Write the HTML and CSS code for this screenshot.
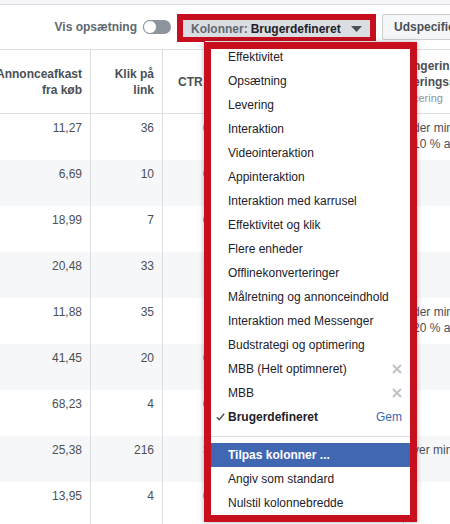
FILE: index.html
```html
<!DOCTYPE html>
<html lang="da">
<head>
<meta charset="utf-8">
<title>Kolonner</title>
<link rel="stylesheet" href="styles.css">
</head>
<body>
<div class="topstrip"></div>
<div class="toolbar">
  <div class="setup">
    <span class="setup-label">Vis opsætning</span>
    <span class="toggle"><span class="toggle-knob"></span></span>
  </div>
  <div class="cols-mark">
    <div class="cols-btn">
      <span class="cols-key">Kolonner:</span><span class="cols-val">Brugerdefineret</span>
      <svg class="caret" width="11" height="6" viewBox="0 0 11 6"><path d="M0 0H11L5.5 6Z" fill="#4b4f56"/></svg>
    </div>
  </div>
  <div class="split-btn">Udspecificering</div>
</div>

<div class="grid">
  <div class="row head">
    <div class="cell num"><span>Annonceafkast</span><span>fra køb</span></div>
    <div class="cell num"><span>Klik på</span><span>link</span></div>
    <div class="cell ctr-head">CTR</div>
    <div class="cell last"><span>ngering</span><span>eringsstatus</span><span class="sub">cering</span></div>
  </div>
  <div class="row"><div class="cell num">11,27</div><div class="cell num">36</div><div class="cell ctr">0,62 %</div><div class="cell last"><span>der minimum</span><span>10 % af</span></div></div>
  <div class="row alt"><div class="cell num">6,69</div><div class="cell num">10</div><div class="cell ctr">0,48 %</div><div class="cell last"></div></div>
  <div class="row"><div class="cell num">18,99</div><div class="cell num">7</div><div class="cell ctr">0,71 %</div><div class="cell last"></div></div>
  <div class="row alt"><div class="cell num">20,48</div><div class="cell num">33</div><div class="cell ctr">1,05 %</div><div class="cell last"></div></div>
  <div class="row"><div class="cell num">11,88</div><div class="cell num">35</div><div class="cell ctr">1,12 %</div><div class="cell last"><span>der minimum</span><span>20 % af</span></div></div>
  <div class="row alt"><div class="cell num">41,45</div><div class="cell num">20</div><div class="cell ctr">0,93 %</div><div class="cell last"></div></div>
  <div class="row"><div class="cell num">68,23</div><div class="cell num">4</div><div class="cell ctr">0,35 %</div><div class="cell last"></div></div>
  <div class="row alt"><div class="cell num">25,38</div><div class="cell num">216</div><div class="cell ctr">3,14 %</div><div class="cell last"><span>ver minimum</span></div></div>
  <div class="row"><div class="cell num">13,95</div><div class="cell num">4</div><div class="cell ctr">0,52 %</div><div class="cell last"></div></div>
</div>

<div class="menu">
  <div class="menu-item">Effektivitet</div>
  <div class="menu-item">Opsætning</div>
  <div class="menu-item">Levering</div>
  <div class="menu-item">Interaktion</div>
  <div class="menu-item">Videointeraktion</div>
  <div class="menu-item">Appinteraktion</div>
  <div class="menu-item">Interaktion med karrusel</div>
  <div class="menu-item">Effektivitet og klik</div>
  <div class="menu-item">Flere enheder</div>
  <div class="menu-item">Offlinekonverteringer</div>
  <div class="menu-item">Målretning og annonceindhold</div>
  <div class="menu-item">Interaktion med Messenger</div>
  <div class="menu-item">Budstrategi og optimering</div>
  <div class="menu-item">MBB (Helt optimneret)<svg class="remove" width="10" height="10" viewBox="0 0 10 10"><path d="M1 1L9 9M9 1L1 9" stroke="#bec3c9" stroke-width="2"/></svg></div>
  <div class="menu-item">MBB<svg class="remove" width="10" height="10" viewBox="0 0 10 10"><path d="M1 1L9 9M9 1L1 9" stroke="#bec3c9" stroke-width="2"/></svg></div>
  <div class="menu-item checked"><svg class="check" width="9" height="8" viewBox="0 0 9 8"><path d="M0.8 4.2L3.2 6.6L8.2 0.8" fill="none" stroke="#4b4f56" stroke-width="1.4"/></svg>Brugerdefineret<span class="gem">Gem</span></div>
  <div class="sep"></div>
  <div class="menu-item active">Tilpas kolonner ...</div>
  <div class="menu-item">Angiv som standard</div>
  <div class="menu-item">Nulstil kolonnebredde</div>
</div>
<div class="menu-mark"></div>
</body>
</html>
```

FILE: styles.css
```css
* { box-sizing: border-box; }
html, body { margin: 0; padding: 0; }
body {
  width: 450px;
  height: 524px;
  overflow: hidden;
  position: relative;
  background: #fff;
  font-family: "Liberation Sans", Arial, Helvetica, sans-serif;
  font-size: 12px;
  color: #1d2129;
}

.topstrip {
  height: 5px;
  background: #f5f6f7;
  border-bottom: 1px solid #dddfe2;
}

.toolbar {
  height: 44px;
  display: flex;
  align-items: center;
}
.setup {
  width: 171px;
  flex: none;
  display: flex;
  justify-content: flex-end;
  align-items: center;
}
.setup-label {
  font-weight: bold;
  color: #606770;
  margin-right: 6px;
  white-space: nowrap;
}
.toggle {
  width: 28px;
  height: 14px;
  border-radius: 7px;
  background: #8d949e;
  display: flex;
  flex: none;
}
.toggle-knob {
  width: 14px;
  height: 14px;
  border-radius: 50%;
  background: #fff;
  border: 1px solid #8d949e;
}

.cols-mark {
  flex: none;
  margin-left: 6px;
  margin-top: 2px;
  border: 6px solid #c80f1e;
  border-bottom-width: 5px;
}
.cols-btn {
  width: 187px;
  height: 17px;
  display: flex;
  align-items: center;
  padding: 0 8px;
  background: #dadde1;
  font-weight: bold;
  white-space: nowrap;
}
.cols-key { color: #606770; }
.cols-val { color: #1d2129; margin-left: 3px; }
.caret { margin-left: auto; flex: none; }

.split-btn {
  flex: none;
  margin-left: 6px;
  height: 26px;
  display: flex;
  align-items: center;
  padding: 0 11px;
  border: 1px solid #ccd0d5;
  border-radius: 2px;
  background: #f5f6f7;
  font-weight: bold;
  color: #4b4f56;
  white-space: nowrap;
}

.grid {
  margin-left: -20px;
  border-top: 1px solid #dddfe2;
}
.row {
  display: grid;
  grid-template-columns: 111px 72px 241px 140px;
  height: 46px;
}
.row.alt { background: #f6f7f9; }
.row.head {
  height: 64px;
  border-bottom: 1px solid #dddfe2;
}
.cell {
  border-right: 1px solid #dddfe2;
  padding: 6px 8px 0;
  line-height: 16px;
  white-space: nowrap;
  color: #4b4f56;
  display: flex;
  flex-direction: column;
}
.cell.num { text-align: right; align-items: flex-end; }
.cell.ctr { padding-left: 40px; }
.cell.last { padding-left: 9px; border-right: none; }

.head .cell {
  padding-top: 0;
  justify-content: center;
  font-weight: bold;
}
.head .ctr-head { padding-left: 15px; }
.head .sub {
  font-weight: normal;
  font-size: 11px;
  color: #90949c;
}

.menu {
  position: absolute;
  left: 205px;
  top: 41px;
  width: 205px;
  padding: 4px 0;
  background: #fff;
}
.menu-item {
  height: 24px;
  display: flex;
  align-items: center;
  padding: 0 8px 0 23px;
  white-space: nowrap;
  color: #1d2129;
}
.menu-item .remove { margin-left: auto; flex: none; }
.menu-item.checked { font-weight: bold; }
.check { margin-left: -12px; margin-right: 3px; flex: none; }
.gem {
  margin-left: auto;
  font-weight: normal;
  color: #4267b2;
}
.sep {
  height: 1px;
  background: #dddfe2;
  margin: 7px 0 6px;
}
.menu-item.active {
  background: #4267b2;
  color: #fff;
  font-weight: bold;
}

.menu-mark {
  position: absolute;
  left: 204px;
  top: 42px;
  width: 213px;
  height: 480px;
  border: 7px solid #c80f1e;
  box-shadow: 0 0 5px rgba(0, 0, 0, 0.3);
  pointer-events: none;
}
```
